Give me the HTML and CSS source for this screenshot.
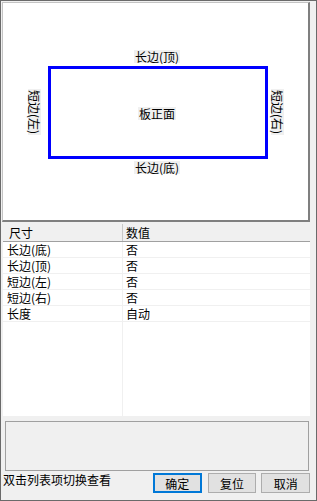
FILE: index.html
```html
<!DOCTYPE html>
<html lang="zh-CN">
<head>
    <meta charset="UTF-8">
    <meta name="viewport" content="width=device-width, initial-scale=1.0">
    <title>板面设置</title>
    <link rel="stylesheet" href="styles.css">
</head>
<body>
    <div class="window">
        <div class="canvas">
            <div class="board"></div>
            <div class="label top">长边(顶)</div>
            <div class="label center">板正面</div>
            <div class="label bottom">长边(底)</div>
            <div class="label side left">短边(左)</div>
            <div class="label side right">短边(右)</div>
        </div>

        <div class="list">
            <div class="row head">
                <div class="cell name">尺寸</div>
                <div class="cell value">数值</div>
            </div>
            <div class="row">
                <div class="cell name">长边(底)</div>
                <div class="cell value">否</div>
            </div>
            <div class="row">
                <div class="cell name">长边(顶)</div>
                <div class="cell value">否</div>
            </div>
            <div class="row">
                <div class="cell name">短边(左)</div>
                <div class="cell value">否</div>
            </div>
            <div class="row">
                <div class="cell name">短边(右)</div>
                <div class="cell value">否</div>
            </div>
            <div class="row">
                <div class="cell name">长度</div>
                <div class="cell value">自动</div>
            </div>
            <div class="row filler">
                <div class="cell name"></div>
                <div class="cell value"></div>
            </div>
        </div>

        <div class="panel"></div>

        <div class="footer">
            <div class="hint">双击列表项切换查看</div>
            <button class="btn default">确定</button>
            <button class="btn">复位</button>
            <button class="btn">取消</button>
        </div>
    </div>
</body>
</html>
```

FILE: styles.css
```css
* {
    box-sizing: border-box;
}
body {
    margin: 0;
    font-family: "Noto Sans CJK SC", "Liberation Sans", sans-serif;
    font-size: 12px;
    color: #000;
    background: #f0f0f0;
}
.window {
    width: 317px;
    height: 501px;
    border: 1px solid #6a6a6a;
    padding: 1px 1px 0 1px;
    background: #f0f0f0;
    display: flex;
    flex-direction: column;
}
.canvas {
    position: relative;
    width: 308px;
    height: 220px;
    background: #fff;
    border-left: 1px solid #c4c4c4;
    border-top: 1px solid #c4c4c4;
    border-right: 2px solid #7f7f7f;
    border-bottom: 2px solid #7f7f7f;
}
.board {
    position: absolute;
    left: 45px;
    top: 63px;
    width: 220px;
    height: 93px;
    border: 3px solid #0000ff;
}
.label {
    position: absolute;
    background: #f0f0f0;
    line-height: 13px;
    height: 13px;
    text-align: center;
    white-space: nowrap;
}
.label.top {
    left: 131px;
    top: 47px;
    width: 46px;
}
.label.center {
    left: 135px;
    top: 104px;
    width: 38px;
}
.label.bottom {
    left: 131px;
    top: 158px;
    width: 46px;
}
.label.side {
    writing-mode: vertical-rl;
    text-orientation: sideways;
    width: 13px;
    height: 46px;
    top: 86px;
}
.label.left {
    left: 25px;
}
.label.right {
    left: 268px;
}
.list {
    margin: 2px 0 0 1px;
    width: 307px;
    height: 192px;
    background: #fff;
    display: flex;
    flex-direction: column;
}
.row {
    display: flex;
    height: 16px;
    border-bottom: 1px solid #f0f0f0;
    line-height: 15px;
}
.row.head {
    height: 18px;
    background: #f0f0f0;
    border-bottom: 1px solid #a0a0a0;
    line-height: 17px;
}
.row.filler {
    flex: 1;
    border-bottom: none;
}
.cell {
    white-space: nowrap;
}
.cell.name {
    width: 120px;
    padding-left: 4px;
    border-right: 1px solid #f0f0f0;
}
.row.head .cell.name {
    padding-left: 6px;
    border-right-color: #c8c8c8;
}
.cell.value {
    padding-left: 3px;
}
.panel {
    margin: 5px 0 0 3px;
    width: 304px;
    height: 50px;
    border: 1px solid #a0a0a0;
    background: #f0f0f0;
}
.footer {
    flex: 1;
    display: flex;
    align-items: flex-start;
    padding-top: 2px;
}
.hint {
    width: 152px;
    padding-left: 1px;
    line-height: 13px;
}
.btn {
    font: inherit;
    width: 49px;
    height: 20px;
    padding: 0;
    margin-right: 5px;
    background: #e1e1e1;
    border: 1px solid #adadad;
    color: #000;
    line-height: 17px;
}
.btn.default {
    border: 2px solid #0078d7;
    margin-right: 6px;
}
```
